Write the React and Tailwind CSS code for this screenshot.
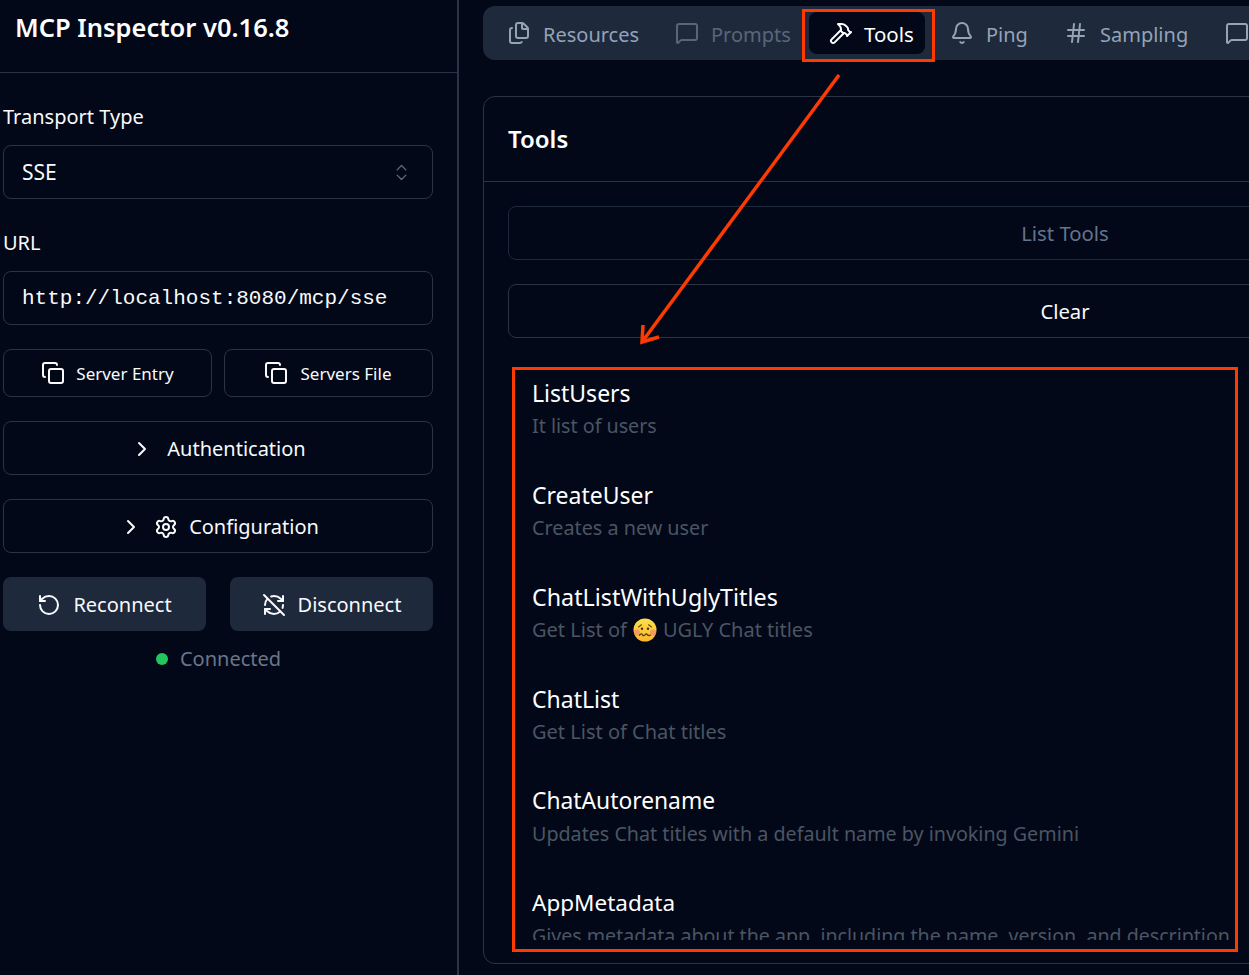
import React from "react";
import {
  Files,
  MessageSquare,
  Hammer,
  Bell,
  Hash,
  Copy,
  ChevronRight,
  ChevronsUpDown,
  Settings,
  RotateCcw,
  RefreshCwOff,
} from "lucide-react";

const tabs = [
  { label: "Resources", icon: Files, cls: "w-[169px] pl-[18px] gap-[12px] text-[#94a3b8]" },
  { label: "Prompts", icon: MessageSquare, cls: "w-[151px] pl-[17px] gap-[12px] text-[#94a3b8] opacity-50" },
  { label: "Tools", icon: Hammer, cls: "w-[116px] pl-[20px] gap-[11px] text-white text-[20.5px] bg-[#020817] rounded-lg h-[42px]" },
  { label: "Ping", icon: Bell, cls: "w-[121px] pl-[25px] gap-[12px] text-[#94a3b8]" },
  { label: "Sampling", icon: Hash, cls: "w-[160px] pl-[18px] gap-[12px] text-[#94a3b8]" },
  { label: "Roots", icon: MessageSquare, cls: "w-[160px] pl-[19px] gap-[12px] text-[#94a3b8]" },
];

// sizes differ a hair per row to follow the reference's hinted text widths
const tools = [
  { name: "ListUsers", nameCls: "text-[23px]", desc: "It list of users", descCls: "text-[19.7px]" },
  { name: "CreateUser", nameCls: "text-[23px]", desc: "Creates a new user", descCls: "text-[19.8px]" },
  { name: "ChatListWithUglyTitles", nameCls: "text-[23.3px]", desc: "ugly", descCls: "text-[20px]" },
  { name: "ChatList", nameCls: "text-[23px]", desc: "Get List of Chat titles", descCls: "text-[20px]" },
  { name: "ChatAutorename", nameCls: "text-[22.8px]", desc: "Updates Chat titles with a default name by invoking Gemini", descCls: "text-[19.7px]" },
  { name: "AppMetadata", nameCls: "text-[22.5px]", desc: "Gives metadata about the app, including the name, version, and description", descCls: "text-[19.6px]" },
];

function WoozyFace() {
  return (
    <svg width="24" height="24" viewBox="0 0 24 24" className="inline-block align-[-5px] mx-[6px]">
      <defs>
        <linearGradient id="face" x1="0" y1="0" x2="0" y2="1">
          <stop offset="0" stopColor="#ffdf4a" />
          <stop offset="1" stopColor="#f9b92a" />
        </linearGradient>
      </defs>
      <circle cx="12" cy="12" r="11.5" fill="url(#face)" />
      <circle cx="4" cy="14.5" r="3" fill="#f0876f" opacity="0.7" />
      <circle cx="20" cy="14.5" r="3" fill="#f0876f" opacity="0.7" />
      <path d="M5.5 9l3-2.2M18.5 9l-3-2.2" stroke="#6b4513" strokeWidth="1.1" fill="none" strokeLinecap="round" />
      <circle cx="9" cy="10.8" r="1.2" fill="#4a2f0c" />
      <circle cx="15" cy="10.8" r="1.2" fill="#4a2f0c" />
      <path d="M6.5 17.2c1.2 -1.6 2.2 -1.6 3 -.4c.8 1.2 1.6 1.2 2.5 0c.9 -1.2 1.7 -1.2 2.5 0c.8 1.2 1.8 .8 3 .4" stroke="#5b3a10" strokeWidth="1.3" fill="none" strokeLinecap="round" />
    </svg>
  );
}

function Sidebar() {
  return (
    <aside className="w-[459px] h-full shrink-0 border-r-2 border-[#2a3444] flex flex-col">
      <div className="h-[73px] border-b border-[#2a3444] pl-[15px] pt-[9px]">
        <h1 className="text-[25.5px] leading-[36px] font-semibold text-white">MCP Inspector v0.16.8</h1>
      </div>

      <div className="pl-[3px] w-[433px] text-[20px] text-[#f8fafc]">
        <div className="mt-[30px] h-[28px] leading-[28px]">Transport Type</div>
        <div className="mt-[14px] h-[54px] border border-[#2a3444] rounded-lg flex items-center justify-between pl-[18px] pr-[20px]">
          <span className="text-[21px] pt-[2px]">SSE</span>
          <ChevronsUpDown size={21} strokeWidth={1.5} className="opacity-40" />
        </div>

        <div className="mt-[30px] h-[28px] leading-[28px]">URL</div>
        <div className="mt-[14px] h-[54px] border border-[#2a3444] rounded-lg flex items-center pl-[18px] pt-[2px] font-['Liberation_Mono',monospace] text-[21px]">
          http://localhost:8080/mcp/sse
        </div>

        <div className="mt-[24px] flex justify-between">
          <button className="w-[209px] h-[48px] border border-[#2a3444] rounded-lg flex items-center justify-center gap-[11px] text-[17px]">
            <Copy size={24} strokeWidth={2} />
            <span className="pt-[2px]">Server Entry</span>
          </button>
          <button className="w-[209px] h-[48px] border border-[#2a3444] rounded-lg flex items-center justify-center gap-[13px] pr-[2px] text-[17px]">
            <Copy size={24} strokeWidth={2} />
            <span className="pt-[2px]">Servers File</span>
          </button>
        </div>

        <button className="mt-[24px] w-full h-[54px] border border-[#2a3444] rounded-lg flex items-center justify-center gap-[13px] pt-[2px]">
          <ChevronRight size={24} strokeWidth={2} />
          Authentication
        </button>
        <button className="mt-[24px] w-full h-[54px] border border-[#2a3444] rounded-lg flex items-center justify-center pl-[2px] pt-[2px]">
          <ChevronRight size={24} strokeWidth={2} />
          <Settings size={24} strokeWidth={2} className="ml-[11px] mr-[11px]" />
          Configuration
        </button>

        <div className="mt-[24px] flex gap-[24px]">
          <button className="flex-1 h-[54px] bg-[#1e293b] rounded-lg flex items-center justify-center gap-[12px] pt-[2px]">
            <RotateCcw size={24} strokeWidth={2} />
            Reconnect
          </button>
          <button className="flex-1 h-[54px] bg-[#1e293b] rounded-lg flex items-center justify-center gap-[12px] pt-[2px]">
            <RefreshCwOff size={24} strokeWidth={2} />
            Disconnect
          </button>
        </div>

        <div className="mt-[14px] h-[28px] flex items-center justify-center gap-[12px] text-[#6b7688] pl-[1px]">
          <span className="w-[12px] h-[12px] rounded-full bg-[#22c55e]" />
          Connected
        </div>
      </div>
    </aside>
  );
}

function Main() {
  return (
    <main className="flex-1 min-w-0 pl-[24px] pt-[6px]">
      <div className="w-[1164px]">
        <div className="h-[54px] bg-[#1e293b] rounded-xl flex items-center pl-[6px] text-[20px] w-[1000px]">
          {tabs.map(({ label, icon: Icon, cls }) => (
            <div key={label} className={"shrink-0 flex items-center " + cls}>
              <Icon size={24} strokeWidth={2} className="shrink-0" />
              <span className="pt-[3px]">{label}</span>
            </div>
          ))}
        </div>

        <section className="mt-[36px] h-[868px] border border-[#2a3444] rounded-xl flex flex-col">
          <div className="h-[85px] border-b border-[#2a3444] pl-[24px] flex items-center">
            <h2 className="text-[24px] font-semibold text-white">Tools</h2>
          </div>
          <div className="flex-1 min-h-0 px-[24px] pt-[24px] flex flex-col">
            <button className="h-[54px] border border-[#1e293b] rounded-lg text-[20.3px] text-[#64748b] shrink-0">
              List Tools
            </button>
            <button className="mt-[24px] h-[54px] border border-[#2a3444] rounded-lg text-[20.3px] text-[#f8fafc] shrink-0">
              Clear
            </button>
            <div className="mt-[36px] h-[566px] overflow-hidden pl-[24px] shrink-0">
              {tools.map((t) => (
                <div key={t.name} className="h-[102px] pt-[1px]">
                  <div className={"leading-[36px] text-white " + t.nameCls}>{t.name}</div>
                  <div className={"leading-[30px] text-[#4b5563] " + t.descCls}>
                    {t.desc === "ugly" ? (
                      <>
                        Get List of
                        <WoozyFace />
                        UGLY Chat titles
                      </>
                    ) : (
                      t.desc
                    )}
                  </div>
                </div>
              ))}
            </div>
          </div>
        </section>
      </div>
    </main>
  );
}

export default function App() {
  return (
    <div className="relative w-[1249px] h-[975px] overflow-hidden bg-[#020817] flex font-['Noto_Sans',sans-serif]">
      <Sidebar />
      <Main />

      {/* annotations drawn on top of the screenshot */}
      <div className="absolute left-[802px] top-[9px] w-[133px] h-[53px] border-[3px] border-[#ff3a00]" />
      <div className="absolute left-[512px] top-[367px] w-[726px] h-[585px] border-[3px] border-[#ff3a00]" />
      <svg className="absolute left-[630px] top-[65px]" width="220" height="290" viewBox="0 0 220 290" fill="none">
        <path d="M209 10L12 277" stroke="#ff3a00" strokeWidth="3.5" />
        <path d="M13 260L12 277L29 272" stroke="#ff3a00" strokeWidth="3.5" />
      </svg>
    </div>
  );
}
